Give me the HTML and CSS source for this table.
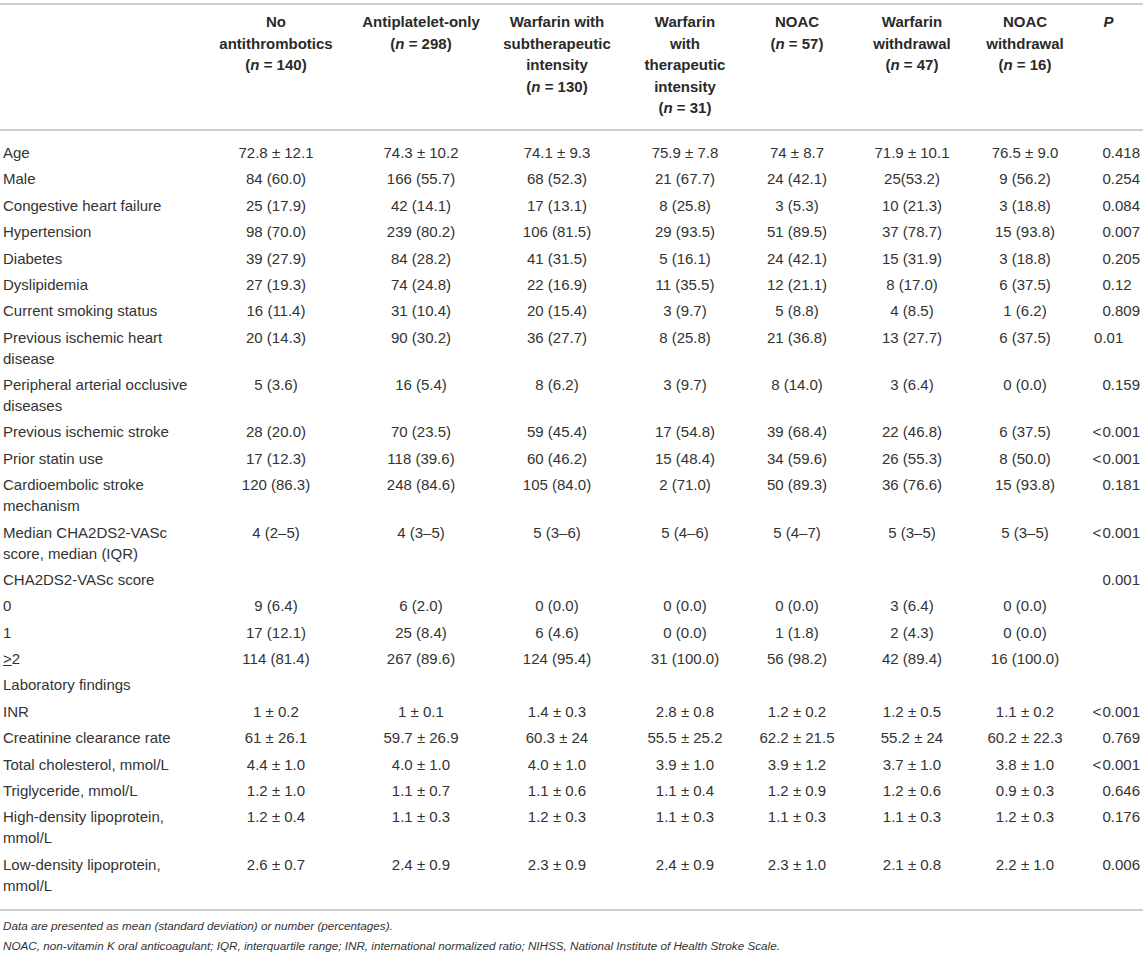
FILE: index.html
```html
<!DOCTYPE html>
<html>
<head>
<meta charset="utf-8">
<link rel="stylesheet" href="styles.css">
</head>
<body>
<div class="wrap">
<table class="tbl">
  <colgroup>
    <col class="c-label"><col class="c1"><col class="c2"><col class="c3"><col class="c4"><col class="c5"><col class="c6"><col class="c7"><col class="cp">
  </colgroup>
  <thead>
    <tr>
      <th></th>
      <th>No<br>antithrombotics<br>(<i>n</i> = 140)</th>
      <th>Antiplatelet-only<br>(<i>n</i> = 298)</th>
      <th>Warfarin with<br>subtherapeutic<br>intensity<br>(<i>n</i> = 130)</th>
      <th>Warfarin<br>with<br>therapeutic<br>intensity<br>(<i>n</i> = 31)</th>
      <th>NOAC<br>(<i>n</i> = 57)</th>
      <th>Warfarin<br>withdrawal<br>(<i>n</i> = 47)</th>
      <th>NOAC<br>withdrawal<br>(<i>n</i> = 16)</th>
      <th><i>P</i></th>
    </tr>
  </thead>
  <tbody>
    <tr><td>Age</td><td>72.8 ± 12.1</td><td>74.3 ± 10.2</td><td>74.1 ± 9.3</td><td>75.9 ± 7.8</td><td>74 ± 8.7</td><td>71.9 ± 10.1</td><td>76.5 ± 9.0</td><td>0.418</td></tr>
    <tr><td>Male</td><td>84 (60.0)</td><td>166 (55.7)</td><td>68 (52.3)</td><td>21 (67.7)</td><td>24 (42.1)</td><td>25(53.2)</td><td>9 (56.2)</td><td>0.254</td></tr>
    <tr><td>Congestive heart failure</td><td>25 (17.9)</td><td>42 (14.1)</td><td>17 (13.1)</td><td>8 (25.8)</td><td>3 (5.3)</td><td>10 (21.3)</td><td>3 (18.8)</td><td>0.084</td></tr>
    <tr><td>Hypertension</td><td>98 (70.0)</td><td>239 (80.2)</td><td>106 (81.5)</td><td>29 (93.5)</td><td>51 (89.5)</td><td>37 (78.7)</td><td>15 (93.8)</td><td>0.007</td></tr>
    <tr><td>Diabetes</td><td>39 (27.9)</td><td>84 (28.2)</td><td>41 (31.5)</td><td>5 (16.1)</td><td>24 (42.1)</td><td>15 (31.9)</td><td>3 (18.8)</td><td>0.205</td></tr>
    <tr><td>Dyslipidemia</td><td>27 (19.3)</td><td>74 (24.8)</td><td>22 (16.9)</td><td>11 (35.5)</td><td>12 (21.1)</td><td>8 (17.0)</td><td>6 (37.5)</td><td>0.12&#8199;</td></tr>
    <tr><td>Current smoking status</td><td>16 (11.4)</td><td>31 (10.4)</td><td>20 (15.4)</td><td>3 (9.7)</td><td>5 (8.8)</td><td>4 (8.5)</td><td>1 (6.2)</td><td>0.809</td></tr>
    <tr><td>Previous ischemic heart disease</td><td>20 (14.3)</td><td>90 (30.2)</td><td>36 (27.7)</td><td>8 (25.8)</td><td>21 (36.8)</td><td>13 (27.7)</td><td>6 (37.5)</td><td>0.01&#8199;&#8199;</td></tr>
    <tr><td>Peripheral arterial occlusive diseases</td><td>5 (3.6)</td><td>16 (5.4)</td><td>8 (6.2)</td><td>3 (9.7)</td><td>8 (14.0)</td><td>3 (6.4)</td><td>0 (0.0)</td><td>0.159</td></tr>
    <tr><td>Previous ischemic stroke</td><td>28 (20.0)</td><td>70 (23.5)</td><td>59 (45.4)</td><td>17 (54.8)</td><td>39 (68.4)</td><td>22 (46.8)</td><td>6 (37.5)</td><td>&lt;&#8202;0.001</td></tr>
    <tr><td>Prior statin use</td><td>17 (12.3)</td><td>118 (39.6)</td><td>60 (46.2)</td><td>15 (48.4)</td><td>34 (59.6)</td><td>26 (55.3)</td><td>8 (50.0)</td><td>&lt;&#8202;0.001</td></tr>
    <tr><td>Cardioembolic stroke mechanism</td><td>120 (86.3)</td><td>248 (84.6)</td><td>105 (84.0)</td><td>2 (71.0)</td><td>50 (89.3)</td><td>36 (76.6)</td><td>15 (93.8)</td><td>0.181</td></tr>
    <tr><td>Median CHA2DS2-VASc score, median (IQR)</td><td>4 (2–5)</td><td>4 (3–5)</td><td>5 (3–6)</td><td>5 (4–6)</td><td>5 (4–7)</td><td>5 (3–5)</td><td>5 (3–5)</td><td>&lt;&#8202;0.001</td></tr>
    <tr><td>CHA2DS2-VASc score</td><td></td><td></td><td></td><td></td><td></td><td></td><td></td><td>0.001</td></tr>
    <tr><td>0</td><td>9 (6.4)</td><td>6 (2.0)</td><td>0 (0.0)</td><td>0 (0.0)</td><td>0 (0.0)</td><td>3 (6.4)</td><td>0 (0.0)</td><td></td></tr>
    <tr><td>1</td><td>17 (12.1)</td><td>25 (8.4)</td><td>6 (4.6)</td><td>0 (0.0)</td><td>1 (1.8)</td><td>2 (4.3)</td><td>0 (0.0)</td><td></td></tr>
    <tr><td><u>&gt;</u>2</td><td>114 (81.4)</td><td>267 (89.6)</td><td>124 (95.4)</td><td>31 (100.0)</td><td>56 (98.2)</td><td>42 (89.4)</td><td>16 (100.0)</td><td></td></tr>
    <tr><td>Laboratory findings</td><td></td><td></td><td></td><td></td><td></td><td></td><td></td><td></td></tr>
    <tr><td>INR</td><td>1 ± 0.2</td><td>1 ± 0.1</td><td>1.4 ± 0.3</td><td>2.8 ± 0.8</td><td>1.2 ± 0.2</td><td>1.2 ± 0.5</td><td>1.1 ± 0.2</td><td>&lt;&#8202;0.001</td></tr>
    <tr><td>Creatinine clearance rate</td><td>61 ± 26.1</td><td>59.7 ± 26.9</td><td>60.3 ± 24</td><td>55.5 ± 25.2</td><td>62.2 ± 21.5</td><td>55.2 ± 24</td><td>60.2 ± 22.3</td><td>0.769</td></tr>
    <tr><td>Total cholesterol, mmol/L</td><td>4.4 ± 1.0</td><td>4.0 ± 1.0</td><td>4.0 ± 1.0</td><td>3.9 ± 1.0</td><td>3.9 ± 1.2</td><td>3.7 ± 1.0</td><td>3.8 ± 1.0</td><td>&lt;&#8202;0.001</td></tr>
    <tr><td>Triglyceride, mmol/L</td><td>1.2 ± 1.0</td><td>1.1 ± 0.7</td><td>1.1 ± 0.6</td><td>1.1 ± 0.4</td><td>1.2 ± 0.9</td><td>1.2 ± 0.6</td><td>0.9 ± 0.3</td><td>0.646</td></tr>
    <tr><td>High-density lipoprotein, mmol/L</td><td>1.2 ± 0.4</td><td>1.1 ± 0.3</td><td>1.2 ± 0.3</td><td>1.1 ± 0.3</td><td>1.1 ± 0.3</td><td>1.1 ± 0.3</td><td>1.2 ± 0.3</td><td>0.176</td></tr>
    <tr><td>Low-density lipoprotein, mmol/L</td><td>2.6 ± 0.7</td><td>2.4 ± 0.9</td><td>2.3 ± 0.9</td><td>2.4 ± 0.9</td><td>2.3 ± 1.0</td><td>2.1 ± 0.8</td><td>2.2 ± 1.0</td><td>0.006</td></tr>
  </tbody>
</table>
<div class="notes">
  <p>Data are presented as mean (standard deviation) or number (percentages).</p>
  <p>NOAC, non-vitamin K oral anticoagulant; IQR, interquartile range; INR, international normalized ratio; NIHSS, National Institute of Health Stroke Scale.</p>
</div>
</div>
</body>
</html>
```

FILE: styles.css
```css
html, body {
  margin: 0;
  padding: 0;
  background: #ffffff;
}

body {
  font-family: "Liberation Sans", Arial, Helvetica, sans-serif;
  color: #333333;
  font-size: 15px;
}

.wrap {
  width: 1143px;
  padding-top: 3px;
}

.tbl {
  width: 1143px;
  border-collapse: collapse;
  table-layout: fixed;
  border-top: 2px solid #cccccc;
  border-bottom: 2px solid #cccccc;
}

.c-label { width: 200px; }
.c1 { width: 152px; }
.c2 { width: 138px; }
.c3 { width: 134px; }
.c4 { width: 122px; }
.c5 { width: 102px; }
.c6 { width: 128px; }
.c7 { width: 98px; }
.cp { width: 69px; }

.tbl thead th {
  font-weight: bold;
  color: #2a2a2a;
  text-align: center;
  vertical-align: top;
  white-space: nowrap;
  line-height: 21.5px;
  padding: 6px 2px 10px;
  border-bottom: 2px solid #cccccc;
}

.tbl tbody td {
  line-height: 21px;
  padding: 2.7px 2px;
  text-align: center;
  vertical-align: top;
  white-space: nowrap;
}

.tbl tbody td:first-child {
  text-align: left;
  white-space: normal;
  padding-left: 3px;
  padding-right: 8px;
}

.tbl tbody td:last-child {
  text-align: right;
  padding-right: 3px;
}

.tbl tbody tr:first-child td {
  padding-top: 11.5px;
}

.tbl tbody tr:last-child td {
  padding-bottom: 13.5px;
}

.notes {
  padding: 5px 3px 0;
  font-style: italic;
  font-size: 11.7px;
  line-height: 19.5px;
}

.notes p {
  margin: 0;
}
```
